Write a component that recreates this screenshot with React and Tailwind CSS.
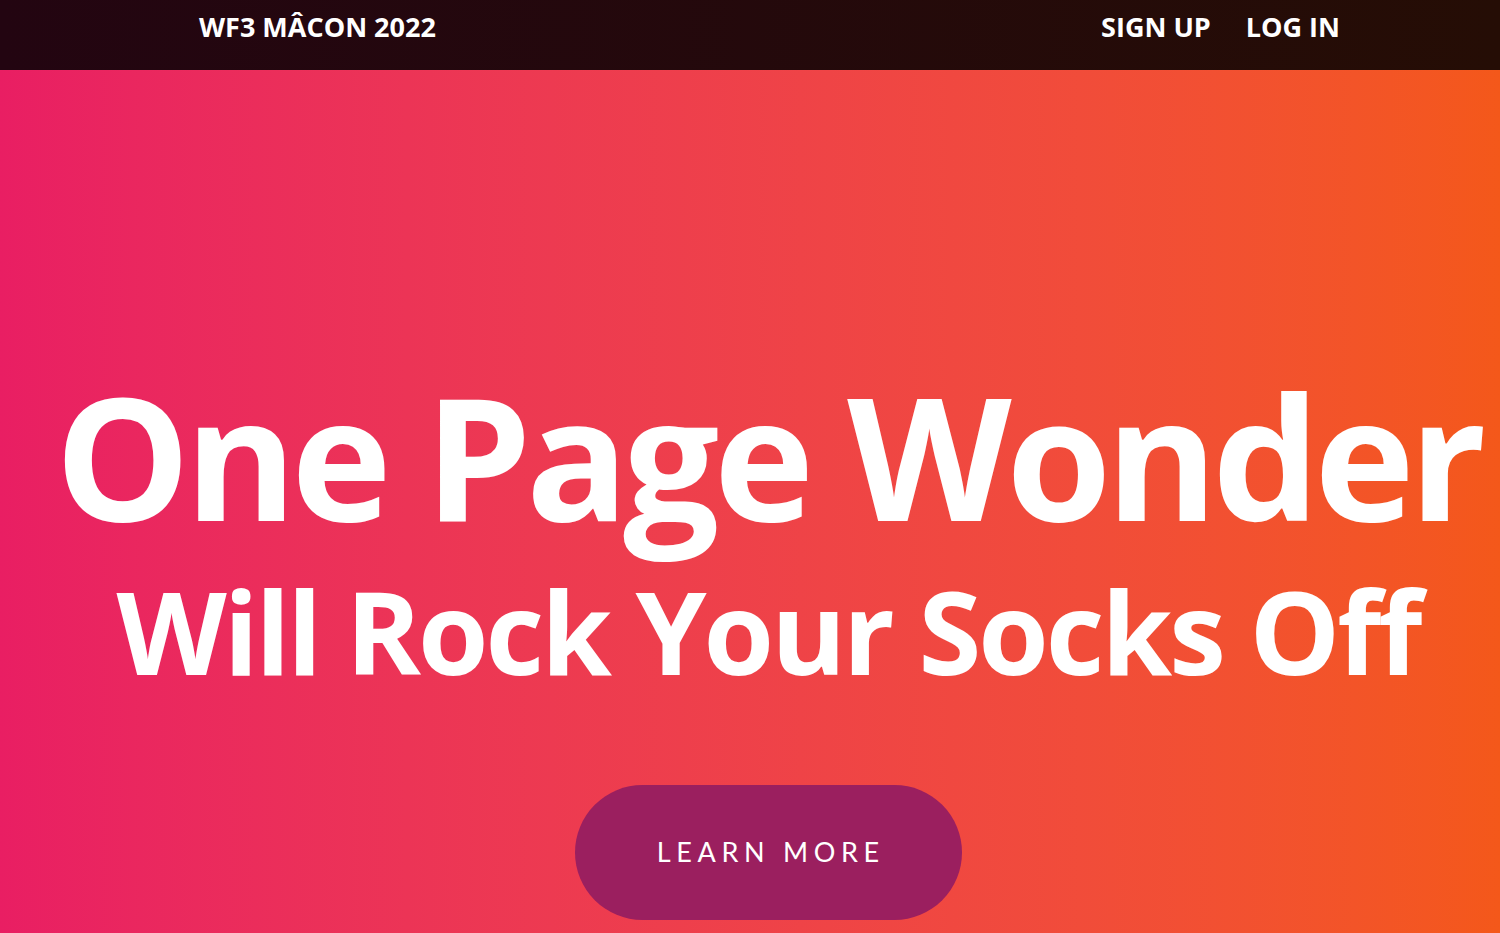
import React from 'react';

export default function App() {
  return (
    <div className="min-h-screen w-full overflow-hidden" style={{ fontFamily: '"Open Sans", sans-serif' }}>
      <nav className="h-[70px] w-full bg-gradient-to-r from-[#230511] to-[#250d05] flex items-start justify-between pl-[199px] pr-[160px]">
        <a href="#" className="mt-[9px] text-white font-bold text-[27px] leading-[36px]">
          WF3 MÂCON 2022
        </a>
        <div className="flex gap-[35px] mt-[9px]">
          <a href="#" className="text-white font-bold text-[27px] leading-[36px]">SIGN UP</a>
          <a href="#" className="text-white font-bold text-[27px] leading-[36px]">LOG IN</a>
        </div>
      </nav>
      <header className="h-[863px] w-full bg-gradient-to-r from-[#e91e63] to-[#f4581a] flex flex-col items-center pl-[36px] text-white">
        <h1 className="mt-[300px] font-bold text-[170px] leading-[170px] tracking-[-5.5px] whitespace-nowrap">
          One Page Wonder
        </h1>
        <h2 className="mt-[34px] font-bold text-[114px] leading-[114px] tracking-[-3px] whitespace-nowrap">
          Will Rock Your Socks Off
        </h2>
        <a
          href="#"
          className="mt-[97px] w-[387px] h-[135px] rounded-full bg-[#9b1f5f] flex items-center justify-center text-[27px] tracking-[0.21em] pl-[0.21em] text-white"
          style={{ fontFamily: 'Lato, sans-serif' }}
        >
          LEARN MORE
        </a>
      </header>
    </div>
  );
}
